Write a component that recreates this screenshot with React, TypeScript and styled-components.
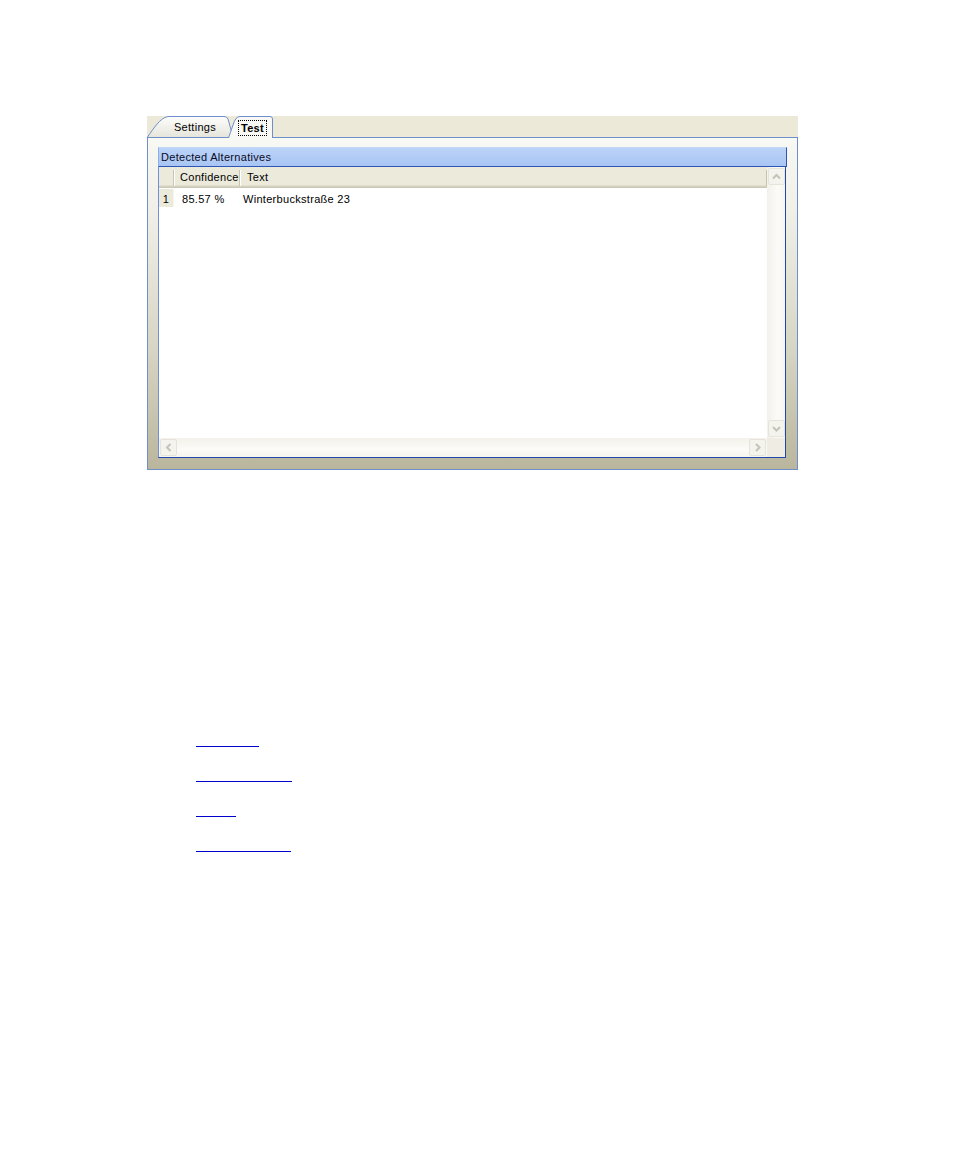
import styled, { createGlobalStyle } from 'styled-components';

const GlobalStyle = createGlobalStyle`
  html, body {
    margin: 0;
    padding: 0;
    background: #ffffff;
  }
  body {
    font-family: "Liberation Sans", Arial, sans-serif;
    font-size: 11px;
    letter-spacing: 0.3px;
    color: #000;
  }
`;

type Column = {
  key: string;
  title: string;
  width?: number;
};

const columns: Column[] = [
  { key: 'confidence', title: 'Confidence', width: 66 },
  { key: 'text', title: 'Text' },
];

const rows = [{ id: 1, confidence: '85.57 %', text: 'Winterbuckstraße 23' }];

const links = [63, 96, 40, 95];

const Page = styled.div`
  padding-top: 116px;
  min-height: 1164px;
  box-sizing: border-box;
`;

const Window = styled.div`
  margin-left: 147px;
  width: 651px;
`;

const TabStrip = styled.div`
  display: flex;
  align-items: flex-end;
  height: 21px;
  background: #ece9d8;
  position: relative;
  z-index: 1;
`;

const Tab = styled.div<{ $w: number; $h: number; $pad: number; $overlap?: number }>`
  position: relative;
  width: ${({ $w }) => $w}px;
  height: ${({ $h }) => $h}px;
  margin-left: ${({ $overlap }) => ($overlap ? -$overlap : 0)}px;
  margin-bottom: ${({ $h }) => 21 - $h}px;
  padding-left: ${({ $pad }) => $pad}px;
  box-sizing: border-box;
  display: flex;
  align-items: center;
  justify-content: center;
  cursor: default;
`;

const TabShape = styled.svg`
  position: absolute;
  left: 0;
  top: 0;
`;

const TabLabel = styled.span<{ $active?: boolean }>`
  position: relative;
  line-height: 14px;
  font-weight: ${({ $active }) => ($active ? 'bold' : 'normal')};
  color: #000;
  padding: 0 2px;
  border: 1px dotted ${({ $active }) => ($active ? '#000' : 'transparent')};
  margin-top: 1px;
`;

const Panel = styled.div`
  height: 333px;
  box-sizing: border-box;
  border: 1px solid #6f8fcc;
  background: linear-gradient(180deg, #f8f8f4 0%, #efeee6 25%, #d6d4c2 65%, #bab69e 100%);
  padding: 9px 10px 11px 10px;
  display: flex;
  flex-direction: column;
`;

const Group = styled.div`
  flex: 1;
  display: flex;
  flex-direction: column;
`;

const GroupHeader = styled.div`
  height: 20px;
  box-sizing: border-box;
  display: flex;
  align-items: center;
  padding-left: 2px;
  background: linear-gradient(180deg, #bcd3f8 0%, #a8c5f3 100%);
  border-top: 1px solid #c3d7f7;
  border-left: 1px solid #8eb0ea;
  border-right: 1px solid #2c55b6;
  border-bottom: 1px solid #2c55b6;
  color: #0a0a1e;
`;

const Grid = styled.div`
  flex: 1;
  display: grid;
  grid-template-columns: 1fr 18px;
  grid-template-rows: 1fr 19px;
  border-left: 1px solid #6f90d8;
  border-right: 1px solid #1f48a8;
  border-bottom: 1px solid #1f48a8;
  margin-right: 1px;
  background: #fff;
  min-height: 0;
`;

const Content = styled.div`
  overflow: hidden;
  background: #fff;
`;

const HeaderRow = styled.div`
  display: flex;
  height: 21px;
  background: #ebeadb;
  box-shadow: inset 0 -1px #cbc7b8, inset 0 -2px #d6d2c2, inset 0 -3px #e2decd;
`;

const HeaderCell = styled.div<{ $w?: number; $pad: number }>`
  position: relative;
  ${({ $w }) => ($w ? `width: ${$w}px; flex: none;` : 'flex: 1;')}
  box-sizing: border-box;
  padding-left: ${({ $pad }) => $pad}px;
  height: 19px;
  line-height: 21px;
  white-space: nowrap;
  &::after {
    content: '';
    position: absolute;
    right: 0;
    top: 3px;
    bottom: 0;
    width: 1px;
    background: #c7c5b2;
    box-shadow: 1px 0 #ffffff;
  }
`;

const DataRow = styled.div`
  display: flex;
  height: 18px;
  margin-top: 1px;
`;

const RowHead = styled.div`
  width: 15px;
  flex: none;
  box-sizing: border-box;
  background: #ebeadb;
  border-right: 1px solid #f6f5ee;
  text-align: center;
  line-height: 20px;
`;

const Cell = styled.div<{ $w?: number; $pad: number }>`
  ${({ $w }) => ($w ? `width: ${$w}px; flex: none;` : 'flex: 1;')}
  box-sizing: border-box;
  padding-left: ${({ $pad }) => $pad}px;
  line-height: 20px;
  white-space: nowrap;
`;

const ScrollBar = styled.div<{ $vertical?: boolean }>`
  display: flex;
  flex-direction: ${({ $vertical }) => ($vertical ? 'column' : 'row')};
  justify-content: space-between;
  padding: 1px;
  background: ${({ $vertical }) =>
    $vertical
      ? 'linear-gradient(90deg, #f3f1ea 0%, #fbfbf8 60%, #f6f5ef 100%)'
      : 'linear-gradient(180deg, #f3f1ea 0%, #fbfbf8 60%, #f6f5ef 100%)'};
`;

const ScrollButton = styled.div`
  width: 17px;
  height: 17px;
  box-sizing: border-box;
  border: 1px solid #e6e4da;
  border-radius: 2px;
  background: #f4f3ee;
  display: flex;
  align-items: center;
  justify-content: center;
`;

const Corner = styled.div`
  background: #efede3;
`;

const LinkList = styled.div`
  margin: 262px 0 0 196px;
  display: flex;
  flex-direction: column;
  align-items: flex-start;
  gap: 20px;
`;

const BlankLink = styled.a<{ $w: number }>`
  display: block;
  width: ${({ $w }) => $w}px;
  height: 14px;
  border-bottom: 1px solid #0000cc;
  color: #0000cc;
`;

type Dir = 'up' | 'down' | 'left' | 'right';

const arrowPoints: Record<Dir, string> = {
  up: '4,9.5 7.5,6 11,9.5',
  down: '4,6 7.5,9.5 11,6',
  left: '9.5,4 6,7.5 9.5,11',
  right: '6,4 9.5,7.5 6,11',
};

const Arrow = ({ dir }: { dir: Dir }) => (
  <ScrollButton>
    <svg width="15" height="15" viewBox="0 0 15 15">
      <polyline points={arrowPoints[dir]} fill="none" stroke="#c4c3b8" strokeWidth="2" />
    </svg>
  </ScrollButton>
);

const App = () => {
  return (
    <Page>
      <GlobalStyle />
      <Window>
        <TabStrip>
          <Tab $w={86} $h={21} $pad={10}>
            <TabShape width="86" height="21" viewBox="0 0 86 21">
              <defs>
                <linearGradient id="tabIdle" x1="0" y1="0" x2="0" y2="1">
                  <stop offset="0" stopColor="#fdfdfc" />
                  <stop offset="1" stopColor="#e6e5dc" />
                </linearGradient>
              </defs>
              <path
                d="M0.5,21 C7,12 13,2 21,0.5 L77,0.5 Q80,0.5 81,3 L86,21 Z"
                fill="url(#tabIdle)"
              />
              <path
                d="M0.5,21 C7,12 13,2 21,0.5 L77,0.5 Q80,0.5 81,3 L86,21"
                fill="none"
                stroke="#6f8fcc"
              />
            </TabShape>
            <TabLabel>Settings</TabLabel>
          </Tab>
          <Tab $w={45} $h={22} $pad={4} $overlap={5}>
            <TabShape width="45" height="22" viewBox="0 0 45 22">
              <path d="M0.5,22 L5,9 Q7.5,0.5 12,0.5 L42,0.5 Q44.5,0.5 44.5,3 L44.5,22 Z" fill="#f8f8f4" />
              <path
                d="M0.5,22 L5,9 Q7.5,0.5 12,0.5 L42,0.5 Q44.5,0.5 44.5,3 L44.5,22"
                fill="none"
                stroke="#6f8fcc"
              />
            </TabShape>
            <TabLabel $active>Test</TabLabel>
          </Tab>
        </TabStrip>
        <Panel>
          <Group>
            <GroupHeader>Detected Alternatives</GroupHeader>
            <Grid>
              <Content>
                <HeaderRow>
                  <HeaderCell $w={15} $pad={0} />
                  <HeaderCell $w={66} $pad={6}>
                    {columns[0].title}
                  </HeaderCell>
                  <HeaderCell $pad={7}>{columns[1].title}</HeaderCell>
                </HeaderRow>
                {rows.map((row) => (
                  <DataRow key={row.id}>
                    <RowHead>{row.id}</RowHead>
                    <Cell $w={66} $pad={8}>
                      {row.confidence}
                    </Cell>
                    <Cell $pad={3}>{row.text}</Cell>
                  </DataRow>
                ))}
              </Content>
              <ScrollBar $vertical>
                <Arrow dir="up" />
                <Arrow dir="down" />
              </ScrollBar>
              <ScrollBar>
                <Arrow dir="left" />
                <Arrow dir="right" />
              </ScrollBar>
              <Corner />
            </Grid>
          </Group>
        </Panel>
      </Window>
      <LinkList>
        {links.map((w, i) => (
          <BlankLink key={i} $w={w} href="#" aria-label={`link ${i + 1}`} />
        ))}
      </LinkList>
    </Page>
  );
};

export default App;
